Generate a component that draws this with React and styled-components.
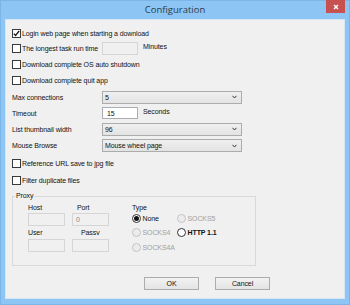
import React from 'react';
import styled, { createGlobalStyle } from 'styled-components';

const Global = createGlobalStyle`
  html, body { margin: 0; padding: 0; }
  body {
    width: 350px; height: 305px; overflow: hidden;
    font-family: "Liberation Sans", Arial, sans-serif;
    font-size: 7px; letter-spacing: -0.1px; color: #111;
  }
  * { box-sizing: border-box; }
`;

const Window = styled.div`
  width: 350px;
  height: 305px;
  background: #8dc6f5;
  border: 1px solid #7cb6e8;
  display: flex;
  flex-direction: column;
`;

const TitleBar = styled.div`
  height: 18px;
  display: grid;
  grid-template-columns: 1fr auto 1fr;
  align-items: start;
`;

const Title = styled.div`
  grid-column: 2;
  font-family: "Open Sans", "Liberation Sans", sans-serif;
  font-size: 9.5px;
  letter-spacing: 0;
  line-height: 18px;
  color: #2b3a4a;
`;

const CloseBtn = styled.div`
  grid-column: 3;
  justify-self: end;
  margin-top: -1px;
  margin-right: 4px;
  width: 19px;
  height: 13px;
  background: #c75050;
  display: flex;
  align-items: center;
  justify-content: center;
`;

const Content = styled.div`
  flex: 1;
  margin: 0 4px 5px 4px;
  background: #f0f0f0;
  border: 1px solid #d6e6f4;
  padding: 6px 0 0 6px;
  display: flex;
  flex-direction: column;
`;

const Row = styled.div`
  height: ${p => p.h}px;
  display: grid;
  grid-template-columns: 90px max-content max-content;
  justify-content: start;
  align-items: center;
`;

const CheckLabel = styled.label`
  display: flex;
  align-items: center;
  white-space: nowrap;
`;

const Box = styled.span`
  width: 9px;
  height: 9px;
  border: 1px solid #3a3a3a;
  background: #fff;
  margin-right: 1px;
  display: flex;
  align-items: center;
  justify-content: center;
  flex: none;
`;

const Label = styled.span`
  white-space: nowrap;
`;

const Suffix = styled.span`
  margin-left: 5px;
  margin-bottom: ${p => p.up || 0}px;
  white-space: nowrap;
`;

const TextBox = styled.div`
  width: ${p => p.w || 36}px;
  height: ${p => p.h || 12}px;
  border: 1px solid ${p => (p.disabled ? '#d5d5d5' : '#abadb3')};
  background: ${p => (p.disabled ? '#f0f0f0' : '#fff')};
  color: ${p => (p.disabled ? '#8a8a8a' : '#111')};
  padding-left: ${p => p.pl || 3}px;
  display: flex;
  align-items: center;
  font-size: 7px;
`;

const Select = styled.div`
  width: 140px;
  height: 13px;
  border: 1px solid #acacac;
  background: linear-gradient(#f0f0f0, #e3e3e3);
  padding: 0 4px 0 2px;
  display: flex;
  align-items: center;
  justify-content: space-between;
`;

const Group = styled.fieldset`
  margin: 3px 0 0 0;
  padding: 1px 0 10px 15px;
  width: 244px;
  border: 1px solid #d9d9d9;
  display: flex;
  gap: 23px;
`;

const Legend = styled.legend`
  padding: 0 1px;
  margin-left: -13px;
  line-height: 10px;
  font-size: 7px;
`;

const HostGrid = styled.div`
  display: grid;
  grid-template-columns: 37px 37px;
  grid-template-rows: 10px 14px 12px 14px;
  column-gap: 7px;
  align-items: center;
`;

const SmallLabel = styled.span`
  padding-left: ${p => p.indent || 0}px;
  white-space: nowrap;
`;

const TypeGrid = styled.div`
  display: grid;
  grid-template-columns: 45px auto;
  grid-template-rows: 10px 13px 15px 15px;
  align-items: center;
`;

const RadioLabel = styled.label`
  display: flex;
  align-items: center;
  white-space: nowrap;
  color: ${p => (p.disabled ? '#a0a0a0' : '#111')};
  font-weight: ${p => (p.bold ? 700 : 400)};
  grid-column: ${p => p.col};
  grid-row: ${p => p.row};
`;

const Circle = styled.span`
  width: 9px;
  height: 9px;
  border-radius: 50%;
  border: 1px solid ${p => (p.disabled ? '#c4c4c4' : '#333')};
  background: ${p => (p.disabled ? '#ececec' : '#fff')};
  margin-right: 1.5px;
  display: flex;
  align-items: center;
  justify-content: center;
  flex: none;
`;

const Dot = styled.span`
  width: 5px;
  height: 5px;
  border-radius: 50%;
  background: #111;
`;

const Buttons = styled.div`
  margin-top: 11px;
  padding-left: 132px;
  display: flex;
  gap: 16px;
`;

const Button = styled.div`
  width: 55px;
  height: 13px;
  border: 1px solid #acacac;
  background: linear-gradient(#f2f2f2, #e4e4e4);
  display: flex;
  align-items: center;
  justify-content: center;
`;

const Check = () => (
  <svg width="7" height="7" viewBox="0 0 7 7">
    <path d="M0.8 3.6 L2.6 5.5 L6.2 0.9" fill="none" stroke="#111" strokeWidth="1.3" />
  </svg>
);

const Chevron = () => (
  <svg width="5" height="4" viewBox="0 0 5 4">
    <path d="M0.5 0.8 L2.5 3 L4.5 0.8" fill="none" stroke="#333" strokeWidth="1" />
  </svg>
);

const CheckItem = ({ checked, children }) => (
  <CheckLabel>
    <Box>{checked && <Check />}</Box>
    {children}
  </CheckLabel>
);

const Radio = ({ checked, disabled, bold, col, row, children }) => (
  <RadioLabel disabled={disabled} bold={bold} col={col} row={row}>
    <Circle disabled={disabled}>{checked && <Dot />}</Circle>
    {children}
  </RadioLabel>
);

const Dropdown = ({ value }) => (
  <Select>
    <span>{value}</span>
    <Chevron />
  </Select>
);

export default function App() {
  return (
    <>
      <Global />
      <Window>
        <TitleBar>
          <Title>Configuration</Title>
          <CloseBtn>
            <svg width="6" height="6" viewBox="0 0 6 6">
              <path d="M1 1 L5 5 M5 1 L1 5" stroke="#fff" strokeWidth="1.4" />
            </svg>
          </CloseBtn>
        </TitleBar>
        <Content>
          <Row h={14}>
            <CheckItem checked>Login web page when starting a download</CheckItem>
          </Row>
          <Row h={16}>
            <CheckItem>The longest task run time</CheckItem>
            <TextBox disabled h={13} />
            <Suffix up={3}>Minutes</Suffix>
          </Row>
          <Row h={16}>
            <CheckItem>Download complete OS auto shutdown</CheckItem>
          </Row>
          <Row h={17}>
            <CheckItem>Download complete quit app</CheckItem>
          </Row>
          <Row h={16}>
            <Label>Max connections</Label>
            <Dropdown value="5" />
          </Row>
          <Row h={16}>
            <Label>Timeout</Label>
            <TextBox pl={4}>15</TextBox>
            <Suffix up={4}>Seconds</Suffix>
          </Row>
          <Row h={16}>
            <Label>List thumbnail width</Label>
            <Dropdown value="96" />
          </Row>
          <Row h={17}>
            <Label>Mouse Browse</Label>
            <Dropdown value="Mouse wheel page" />
          </Row>
          <Row h={18}>
            <CheckItem>Reference URL save to jpg file</CheckItem>
          </Row>
          <Row h={16}>
            <CheckItem>Filter duplicate files</CheckItem>
          </Row>
          <Group>
            <Legend>Proxy</Legend>
            <HostGrid>
              <SmallLabel indent={0}>Host</SmallLabel>
              <SmallLabel indent={5}>Port</SmallLabel>
              <TextBox disabled w={37} h={13} />
              <TextBox disabled w={37} h={13} pl={3}>0</TextBox>
              <SmallLabel indent={0}>User</SmallLabel>
              <SmallLabel indent={9}>Passv</SmallLabel>
              <TextBox disabled w={37} h={13} />
              <TextBox disabled w={37} h={13} />
            </HostGrid>
            <TypeGrid>
              <SmallLabel>Type</SmallLabel>
              <Radio checked col={1} row={2}>None</Radio>
              <Radio disabled col={2} row={2}>SOCKS5</Radio>
              <Radio disabled col={1} row={3}>SOCKS4</Radio>
              <Radio bold col={2} row={3}>HTTP 1.1</Radio>
              <Radio disabled col={1} row={4}>SOCKS4A</Radio>
            </TypeGrid>
          </Group>
          <Buttons>
            <Button>OK</Button>
            <Button>Cancel</Button>
          </Buttons>
        </Content>
      </Window>
    </>
  );
}
